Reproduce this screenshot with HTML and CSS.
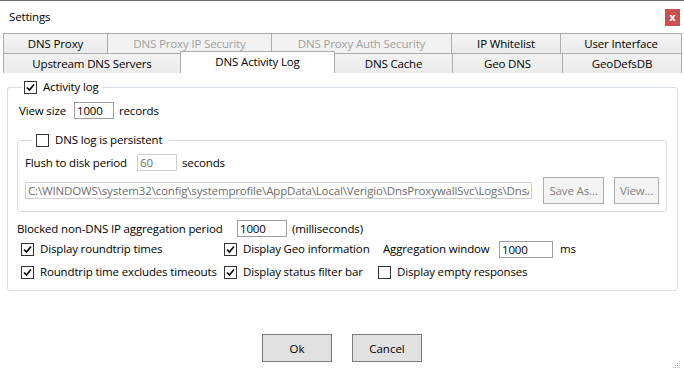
FILE: index.html
```html
<!DOCTYPE html>
<html lang="en">
<head>
    <meta charset="UTF-8">
    <title>Settings</title>
    <link rel="stylesheet" href="styles.css">
</head>
<body>
    <div class="window">
        <div class="titlebar">
            <span class="title">Settings</span>
            <button class="close">x</button>
        </div>

        <div class="tabs">
            <div class="tab-row">
                <div class="tab w-proxy">DNS Proxy</div>
                <div class="tab w-ipsec disabled">DNS Proxy IP Security</div>
                <div class="tab w-authsec disabled">DNS Proxy Auth Security</div>
                <div class="tab w-white">IP Whitelist</div>
                <div class="tab w-ui last">User Interface</div>
            </div>
            <div class="tab-row">
                <div class="tab w-upstream">Upstream DNS Servers</div>
                <div class="tab w-activity active">DNS Activity Log</div>
                <div class="tab w-cache">DNS Cache</div>
                <div class="tab w-geo">Geo DNS</div>
                <div class="tab w-defs last">GeoDefsDB</div>
            </div>
        </div>

        <fieldset class="group outer">
            <legend class="legend-outer">
                <label class="check">
                    <span class="box"><svg width="11" height="11" viewBox="0 0 11 11"><path d="M2 5.5 L4.5 8 L9 2.5" fill="none" stroke="#000" stroke-width="1.6"/></svg></span>
                    Activity log
                </label>
            </legend>

            <div class="row row-view">
                <span class="lbl lbl-view">View size</span>
                <input type="text" class="field w40" value="1000">
                <span class="after">records</span>
            </div>

            <fieldset class="group inner">
                <legend class="legend-inner">
                    <label class="check">
                        <span class="box"></span>
                        DNS log is persistent
                    </label>
                </legend>

                <div class="row row-flush">
                    <span class="lbl lbl-flush">Flush to disk period</span>
                    <input type="text" class="field w40 off" value="60" disabled>
                    <span class="after">seconds</span>
                </div>

                <div class="row row-path">
                    <input type="text" class="field path off" value="C:\WINDOWS\system32\config\systemprofile\AppData\Local\Verigio\DnsProxywallSvc\Logs\DnsActivity.log" disabled>
                    <button class="btn-small save" disabled>Save As...</button>
                    <button class="btn-small view" disabled>View...</button>
                </div>
            </fieldset>

            <div class="row row-blocked">
                <span class="lbl lbl-blocked">Blocked non-DNS IP aggregation period</span>
                <input type="text" class="field w50" value="1000">
                <span class="after">(milliseconds)</span>
            </div>

            <div class="options">
                <label class="check">
                    <span class="box"><svg width="11" height="11" viewBox="0 0 11 11"><path d="M2 5.5 L4.5 8 L9 2.5" fill="none" stroke="#000" stroke-width="1.6"/></svg></span>
                    Display roundtrip times
                </label>
                <label class="check">
                    <span class="box"><svg width="11" height="11" viewBox="0 0 11 11"><path d="M2 5.5 L4.5 8 L9 2.5" fill="none" stroke="#000" stroke-width="1.6"/></svg></span>
                    Display Geo information
                </label>
                <div class="agg">
                    <span class="lbl lbl-agg">Aggregation window</span>
                    <input type="text" class="field w54" value="1000">
                    <span class="after ms">ms</span>
                </div>

                <label class="check">
                    <span class="box"><svg width="11" height="11" viewBox="0 0 11 11"><path d="M2 5.5 L4.5 8 L9 2.5" fill="none" stroke="#000" stroke-width="1.6"/></svg></span>
                    Roundtrip time excludes timeouts
                </label>
                <label class="check">
                    <span class="box"><svg width="11" height="11" viewBox="0 0 11 11"><path d="M2 5.5 L4.5 8 L9 2.5" fill="none" stroke="#000" stroke-width="1.6"/></svg></span>
                    Display status filter bar
                </label>
                <label class="check">
                    <span class="box"></span>
                    Display empty responses
                </label>
            </div>
        </fieldset>

        <div class="actions">
            <button class="btn">Ok</button>
            <button class="btn">Cancel</button>
        </div>

        <svg class="grip" width="10" height="10" viewBox="0 0 10 10">
            <rect x="8" y="2" width="1" height="1"/>
            <rect x="6" y="4" width="1" height="1"/>
            <rect x="8" y="4" width="1" height="1"/>
            <rect x="4" y="6" width="1" height="1"/>
            <rect x="6" y="6" width="1" height="1"/>
            <rect x="8" y="6" width="1" height="1"/>
            <rect x="2" y="8" width="1" height="1"/>
            <rect x="4" y="8" width="1" height="1"/>
            <rect x="6" y="8" width="1" height="1"/>
            <rect x="8" y="8" width="1" height="1"/>
        </svg>
    </div>
</body>
</html>
```

FILE: styles.css
```css
:root {
    --tab-border: #acacac;
    --tab-bg: #f0f0f0;
    --group-border: #d5dfe5;
    --field-border: #a0a0a0;
    --disabled-text: #a0a0a0;
    --text-color: #000;
}

* {
    box-sizing: border-box;
    margin: 0;
    padding: 0;
}

body {
    font-family: 'Segoe UI', 'Open Sans', Arial, sans-serif;
    font-size: 11.5px;
    letter-spacing: -0.15px;
    line-height: 16px;
    color: var(--text-color);
    background: #fff;
    width: 684px;
    height: 372px;
    overflow: hidden;
}

.window {
    position: relative;
    width: 684px;
    height: 372px;
    border-top: 1px solid #6e6e6e;
}

/* title bar */

.titlebar {
    height: 32px;
    display: flex;
    align-items: center;
    justify-content: space-between;
    padding-left: 9px;
    padding-right: 4px;
}

.close {
    width: 15px;
    height: 17px;
    border: none;
    background-color: #c75050;
    color: #fff;
    font-family: 'DejaVu Sans', sans-serif;
    font-size: 10px;
    font-weight: bold;
    line-height: 15px;
}

/* tabs */

.tabs {
    margin-left: 3px;
    width: 679px;
}

.tab-row {
    display: flex;
    height: 20px;
}

.tab {
    height: 20px;
    border-top: 1px solid var(--tab-border);
    border-left: 1px solid var(--tab-border);
    background: linear-gradient(#f3f3f3, #ebebeb);
    text-align: center;
    line-height: 19px;
    white-space: nowrap;
}

.tab.last {
    border-right: 1px solid var(--tab-border);
}

.tab.disabled {
    color: var(--disabled-text);
    background: #f2f2f2;
}

.tab.active {
    margin-top: -2px;
    height: 22px;
    background: #fff;
    border-right: 1px solid var(--tab-border);
    line-height: 19px;
    position: relative;
}

.tab.active + .tab {
    border-left: none;
}

.w-proxy { width: 104px; }
.w-ipsec { width: 164px; }
.w-authsec { width: 180px; }
.w-white { width: 109px; }
.w-ui { width: 122px; }
.w-upstream { width: 177px; }
.w-activity { width: 155px; }
.w-cache { width: 117px; }
.w-geo { width: 110px; }
.w-defs { width: 120px; }

/* group boxes */

.group {
    border: 1px solid var(--group-border);
    border-radius: 3px;
    min-width: 0;
}

.outer {
    width: 671px;
    margin: 6px 0 0 7px;
    padding: 0 10px 9px 9px;
}

.inner {
    width: 650px;
    margin-top: 13px;
    padding: 0 7px 7px 7px;
}

legend {
    height: 16px;
}

legend .check {
    display: flex;
}

.legend-outer {
    margin-left: 5px;
    padding: 0 3px 0 2px;
}

.legend-inner {
    margin-left: 7px;
    padding: 0 6px 0 4px;
}

/* check boxes */

.check {
    display: inline-flex;
    align-items: center;
    height: 16px;
    white-space: nowrap;
}

.box {
    width: 13px;
    height: 13px;
    border: 1px solid #333;
    background: #fff;
    margin-right: 6px;
    display: flex;
    align-items: center;
    justify-content: center;
}

/* rows */

.row {
    display: flex;
    align-items: center;
    height: 17px;
}

.row-view {
    margin-top: 7px;
    padding-left: 2px;
}

.row-flush {
    margin-top: 6px;
}

.row-path {
    margin-top: 6px;
    height: 27px;
}

.row-blocked {
    margin-top: 8px;
}

.lbl {
    white-space: nowrap;
}

.lbl-view { width: 55px; }
.lbl-flush { width: 112px; }
.lbl-blocked { width: 220px; }
.lbl-agg { width: 116px; }

.after {
    margin-left: 5px;
}

.after.ms {
    margin-left: 7px;
}

.field {
    height: 17px;
    border: 1px solid var(--field-border);
    font-family: inherit;
    font-size: 11.5px;
    letter-spacing: -0.15px;
    padding: 0 2px;
    color: #000;
    background: #fff;
    outline: none;
}

.field.off {
    border-color: #cfcfcf;
    color: #6d6d6d;
}

.w40 { width: 40px; }
.w50 { width: 50px; }
.w54 { width: 54px; }

.path {
    flex: 1;
    margin-right: 11px;
}

.btn-small {
    height: 27px;
    border: 1px solid #adadad;
    background: #f4f4f4;
    color: #838383;
    font-family: inherit;
    font-size: 11.5px;
    letter-spacing: -0.15px;
}

.save {
    width: 61px;
    margin-right: 10px;
}

.view {
    width: 45px;
}

/* option grid */

.options {
    margin-top: 3px;
    padding-left: 4px;
    display: grid;
    grid-template-columns: 203px 154px auto;
    grid-auto-rows: 18px;
    row-gap: 5px;
    align-items: center;
}

.options .check {
    height: 18px;
}

.agg {
    display: flex;
    align-items: center;
    padding-left: 5px;
}

/* dialog buttons */

.actions {
    margin-top: 43px;
    display: flex;
    justify-content: center;
    gap: 20px;
}

.btn {
    width: 70px;
    height: 28px;
    border: 1px solid #7a7a7a;
    background-color: #e1e1e1;
    font-family: inherit;
    font-size: 11.5px;
    color: #000;
}

.grip {
    position: absolute;
    right: 3px;
    bottom: 3px;
    fill: #b5b5b5;
}
```
